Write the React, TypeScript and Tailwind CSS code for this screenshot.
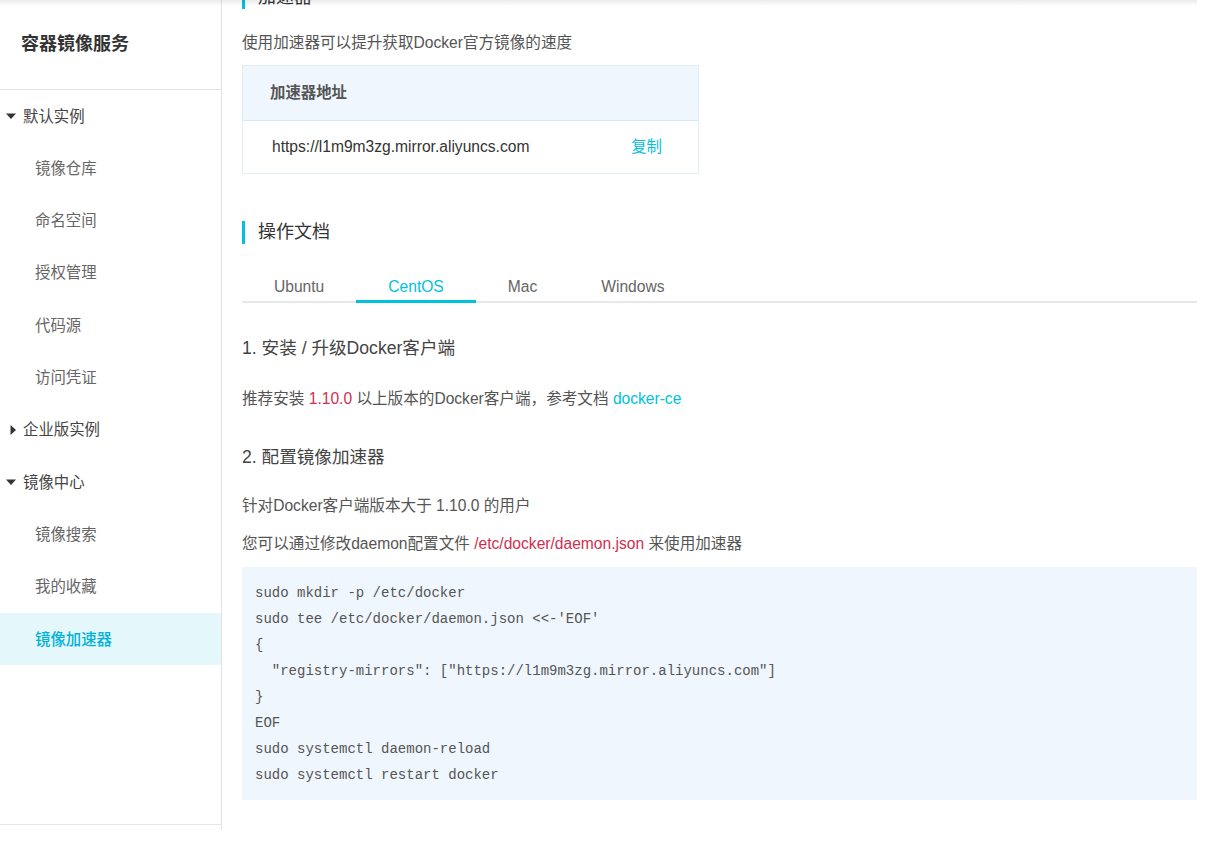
import React from "react";

const font = { fontFamily: '"Liberation Sans", "Noto Sans CJK SC", sans-serif' };

function Down() {
  return (
    <svg width="12" height="8" viewBox="0 0 12 8" className="shrink-0">
      <path d="M1 1.5 L11 1.5 L6 7 Z" fill="#333" />
    </svg>
  );
}
function Right() {
  return (
    <svg width="8" height="12" viewBox="0 0 8 12" className="shrink-0">
      <path d="M1.5 1 L7 6 L1.5 11 Z" fill="#333" />
    </svg>
  );
}

type Item = { label: string; kind: "open" | "closed" | "sub"; active?: boolean };
const items: Item[] = [
  { label: "默认实例", kind: "open" },
  { label: "镜像仓库", kind: "sub" },
  { label: "命名空间", kind: "sub" },
  { label: "授权管理", kind: "sub" },
  { label: "代码源", kind: "sub" },
  { label: "访问凭证", kind: "sub" },
  { label: "企业版实例", kind: "closed" },
  { label: "镜像中心", kind: "open" },
  { label: "镜像搜索", kind: "sub" },
  { label: "我的收藏", kind: "sub" },
  { label: "镜像加速器", kind: "sub", active: true },
];

const code = [
  "sudo mkdir -p /etc/docker",
  "sudo tee /etc/docker/daemon.json <<-'EOF'",
  "{",
  '  "registry-mirrors": ["https://l1m9m3zg.mirror.aliyuncs.com"]',
  "}",
  "EOF",
  "sudo systemctl daemon-reload",
  "sudo systemctl restart docker",
];

export default function App() {
  return (
    <div className="relative w-[1211px] h-[852px] bg-white overflow-hidden" style={font}>
      <div className="absolute left-0 top-0 w-[1197px] h-[6px] bg-linear-to-b from-black/8 to-transparent pointer-events-none z-10" />
      <div className="flex w-[1197px]">
        {/* Sidebar */}
        <aside className="w-[222px] h-[830px] shrink-0 border-r border-[#e3e3e3] flex flex-col">
          <div className="h-[90px] shrink-0 border-b border-[#e3e3e3] flex items-center pl-[21px]">
            <span className="text-[18px] font-bold text-[#333]">容器镜像服务</span>
          </div>
          <nav className="flex flex-col">
            {items.map((it) => (
              <div
                key={it.label}
                className={
                  "h-[52.3px] flex items-center text-[15.4px] " +
                  (it.active ? "bg-[#e4f7fb] " : "")
                }
              >
                {it.kind === "open" && (
                  <div className="flex items-center pl-[5px] gap-[6px] text-[#444]">
                    <Down />
                    <span>{it.label}</span>
                  </div>
                )}
                {it.kind === "closed" && (
                  <div className="flex items-center pl-[9px] gap-[6px] text-[#444]">
                    <Right />
                    <span>{it.label}</span>
                  </div>
                )}
                {it.kind === "sub" && (
                  <span
                    className={
                      "pl-[35px] " +
                      (it.active ? "text-[#00b2d8] font-medium" : "text-[#666]")
                    }
                  >
                    {it.label}
                  </span>
                )}
              </div>
            ))}
          </nav>
          <div className="flex-1" />
          <div className="h-[6px] border-t border-[#e6e6e6]" />
        </aside>

        {/* Main */}
        <main className="flex-1 pl-[20px] flex flex-col">
          <div className="mt-[-14px] h-[23px] flex items-center border-l-[3px] border-[#00c1de] pl-[13px]">
            <span className="text-[18px] text-[#333]">加速器</span>
          </div>
          <p className="mt-[23px] text-[15.6px] leading-[22px] text-[#555]">
            使用加速器可以提升获取Docker官方镜像的速度
          </p>
          <div className="mt-[11px] w-[457px] border border-[#e4ecf4]">
            <div className="h-[55px] bg-[#eff6fe] border-b border-[#d6e7f8] flex items-center pl-[27px]">
              <span className="text-[15.4px] font-bold text-[#555]">加速器地址</span>
            </div>
            <div className="h-[52px] flex items-center justify-between pl-[29px] pr-[36px]">
              <span className="text-[15.6px] text-[#333]">https://l1m9m3zg.mirror.aliyuncs.com</span>
              <span className="text-[15.4px] text-[#00c1de]">复制</span>
            </div>
          </div>

          <div className="mt-[47px] h-[23px] flex items-center border-l-[3px] border-[#00c1de] pl-[13px]">
            <span className="text-[18px] text-[#333]">操作文档</span>
          </div>

          <div className="mt-[23px] flex border-b-2 border-[#e8e8e8]">
            {["Ubuntu", "CentOS", "Mac", "Windows"].map((t) => {
              const active = t === "CentOS";
              return (
                <div
                  key={t}
                  className={
                    "relative h-[34px] pt-[6px] px-[32px] flex items-center text-[15.6px] " +
                    (active ? "text-[#00c1de]" : "text-[#666]")
                  }
                >
                  {t}
                  {active && (
                    <div className="absolute left-0 right-0 bottom-[-2px] h-[3px] bg-[#00c1de]" />
                  )}
                </div>
              );
            })}
          </div>

          <h3 className="mt-[32px] text-[17.6px] leading-[26px] text-[#444]">
            1. 安装 / 升级Docker客户端
          </h3>
          <p className="mt-[27px] text-[15.6px] leading-[22px] text-[#555]">
            推荐安装 <span className="text-[#d0304f]">1.10.0</span> 以上版本的Docker客户端，参考文档{" "}
            <span className="text-[#00c1de]">docker-ce</span>
          </p>

          <h3 className="mt-[34px] text-[17.6px] leading-[26px] text-[#444]">2. 配置镜像加速器</h3>
          <p className="mt-[25px] text-[15.6px] leading-[22px] text-[#555]">
            针对Docker客户端版本大于 1.10.0 的用户
          </p>
          <p className="mt-[16px] text-[15.6px] leading-[22px] text-[#555]">
            您可以通过修改daemon配置文件{" "}
            <span className="text-[#d0304f]">/etc/docker/daemon.json</span> 来使用加速器
          </p>

          <pre
            className="mt-[12px] bg-[#eff6fd] pl-[13px] pt-[13px] pb-[12px] text-[14px] leading-[26px] text-[#555]"
            style={{ fontFamily: '"Liberation Mono", "DejaVu Sans Mono", monospace' }}
          >
            {code.join("\n")}
          </pre>
        </main>
      </div>
    </div>
  );
}
